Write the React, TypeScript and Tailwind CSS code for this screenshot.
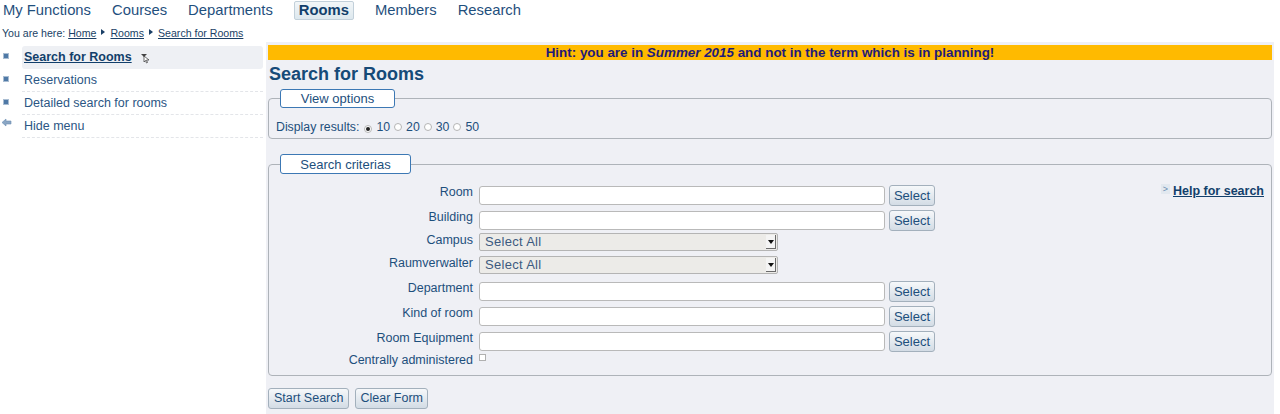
import React from "react";

const F = { fontFamily: '"Liberation Sans", Arial, sans-serif' };

function Bullet() {
  return <span className="inline-block w-[6px] h-[6px] bg-[#4f79a6] border border-[#a9bdd2] mt-[5px] ml-[3px]" />;
}

function SelectBtn() {
  return (
    <button className="h-[21px] w-[46px] rounded-[3px] border border-[#a3b0bc] bg-gradient-to-b from-[#f6f8fa] to-[#d3dce5] text-[13px] text-[#1d4f7c] leading-none">
      Select
    </button>
  );
}

function TextInput() {
  return <div className="h-[19px] w-[406px] bg-white border border-[#b9b9b9] rounded-[3px]" />;
}

function FakeSelect() {
  return (
    <div className="h-[18px] w-[299px] bg-[#ecebe8] border border-[#b4b4b4] rounded-[2px] flex items-center justify-between pl-[5px] pr-[1px]">
      <span className="text-[13px] text-[#3c5a80] tracking-[0.3px]">Select All</span>
      <span className="w-[10px] h-[14px] bg-[#f4f4f4] border-r border-b border-[#6a6a6a] flex items-center justify-center">
        <svg width="6" height="4" viewBox="0 0 6 4"><path d="M0 0h6L3 4z" fill="#111" /></svg>
      </span>
    </div>
  );
}

function Row({ label, children, h }: { label: string; children: React.ReactNode; h: string }) {
  return (
    <div className={`flex items-start ${h}`}>
      <div className="w-[204px] text-right text-[12.5px] text-[#1d4f7c] leading-[15px]">{label}</div>
      <div className="ml-[6px] flex items-center gap-[4px]">{children}</div>
    </div>
  );
}

function Radio({ checked }: { checked?: boolean }) {
  return (
    <span className="inline-flex w-[8px] h-[8px] rounded-full border border-[#b5b5b5] bg-white items-center justify-center mx-[4px]">
      {checked && <span className="w-[4px] h-[4px] rounded-full bg-[#222]" />}
    </span>
  );
}

export default function App() {
  const nav = ["My Functions", "Courses", "Departments", "Rooms", "Members", "Research"];
  return (
    <div className="w-[1280px] h-[414px] bg-white text-[#1d4f7c] overflow-hidden" style={F}>
      {/* Top nav */}
      <div className="flex items-center h-[20px] pl-[3px] text-[14.8px] leading-none text-[#1f4f7d]">
        {nav.map((n) =>
          n === "Rooms" ? (
            <span
              key={n}
              className="mr-[21px] h-[19px] px-[4px] flex items-center font-bold text-[#123f6b] bg-gradient-to-b from-[#f2f6f8] to-[#dde8ee] border border-[#c2d0da] rounded-[2px]"
            >
              {n}
            </span>
          ) : (
            <span key={n} className="mr-[21px]">{n}</span>
          )
        )}
      </div>
      {/* Breadcrumb */}
      <div className="flex items-center h-[13px] mt-[7px] pl-[2px] text-[10.6px] leading-none text-[#1a3f66]">
        <span>You are here:&nbsp;</span>
        <span className="underline">Home</span>
        <svg width="12" height="8" viewBox="0 0 12 8" className="mx-[1px] mb-[3px]"><path d="M4 1l4 3-4 3z" fill="#1a3f66" /></svg>
        <span className="underline">Rooms</span>
        <svg width="12" height="8" viewBox="0 0 12 8" className="mx-[1px] mb-[3px]"><path d="M4 1l4 3-4 3z" fill="#1a3f66" /></svg>
        <span className="underline">Search for Rooms</span>
      </div>

      <div className="flex mt-[2px]">
        {/* Sidebar */}
        <div className="w-[263px] pt-[4px] text-[12.5px]">
          {[
            { t: "Search for Rooms", active: true },
            { t: "Reservations" },
            { t: "Detailed search for rooms" },
            { t: "Hide menu", hide: true },
          ].map((it) => (
            <div key={it.t} className="flex h-[23px]">
              <div className="w-[22px] shrink-0">
                {it.hide ? (
                  <svg width="12" height="10" viewBox="0 0 12 10" className="mt-[3px] ml-[1px]">
                    <path d="M1 4.5L5 1v2h5v3H5v2z" fill="#8aa6c4" stroke="#6c8fb3" strokeWidth="0.6" />
                  </svg>
                ) : (
                  <Bullet />
                )}
              </div>
              <div
                className={`flex-1 flex items-center pl-[2px] border-b border-dashed border-[#e3e5e9] ${
                  it.active ? "bg-[#eef0f4] rounded-[3px] border-transparent" : ""
                }`}
              >
                {it.active ? (
                  <span className="font-bold underline text-[#123f6b]">{it.t}</span>
                ) : (
                  <span className="text-[#2b5684]">{it.t}</span>
                )}
                {it.active && (
                  <svg width="12" height="12" viewBox="0 0 12 12" className="ml-[8px] mt-[4px]">
                    <path d="M1 1h6L4 4z" fill="#444" />
                    <path d="M4 3v6l1.5-1.5 1 2.5 1-0.5-1-2.5H9z" fill="#fff" stroke="#333" strokeWidth="0.7" />
                  </svg>
                )}
              </div>
            </div>
          ))}
        </div>

        {/* Main */}
        <div className="ml-[3px] w-[1008px] h-[372px] bg-[#eff0f5] pt-[3px] px-[2px]">
          <div className="h-[15px] bg-[#ffba00] flex items-center justify-center text-[13.4px] font-bold text-[#1f1a78] leading-none">
            Hint: you are in&nbsp;<i>Summer 2015</i>&nbsp;and not in the term which is in planning!
          </div>
          <div className="text-[18px] font-bold text-[#164a78] leading-none mt-[5px] ml-[1px]">Search for Rooms</div>

          <fieldset className="mt-[6px] border border-[#aeb3b9] rounded-[4px] pl-[7px] pb-[4px] h-[50px]">
            <legend className="ml-[4px] w-[115px] h-[19px] bg-white border border-[#3c78b4] rounded-[3px] text-[13px] text-[#1d4f7c] flex items-center justify-center leading-none">
              View options
            </legend>
            <div className="flex items-center text-[12.3px] text-[#1d4f7c] mt-[10px]">
              <span>Display results:</span>
              <span className="ml-[1px]"><Radio checked /></span>10
              <Radio />20
              <Radio />30
              <Radio />50
            </div>
          </fieldset>

          <fieldset className="mt-[15px] border border-[#aeb3b9] rounded-[4px] pl-[7px] h-[222px]">
            <legend className="ml-[4px] w-[131px] h-[20px] bg-white border border-[#3c78b4] rounded-[3px] text-[13px] text-[#1d4f7c] flex items-center justify-center leading-none">
              Search criterias
            </legend>
            <div className="flex mt-[11px] -ml-[7px]">
              <div>
                <Row label="Room" h="h-[25px]"><TextInput /><SelectBtn /></Row>
                <Row label="Building" h="h-[23px]"><TextInput /><SelectBtn /></Row>
                <Row label="Campus" h="h-[23px]"><FakeSelect /></Row>
                <Row label="Raumverwalter" h="h-[25px]"><FakeSelect /></Row>
                <Row label="Department" h="h-[25px]"><TextInput /><SelectBtn /></Row>
                <Row label="Kind of room" h="h-[25px]"><TextInput /><SelectBtn /></Row>
                <Row label="Room Equipment" h="h-[22px]"><TextInput /><SelectBtn /></Row>
                <Row label="Centrally administered" h="h-[16px]">
                  <span className="w-[7px] h-[7px] border border-[#b0b0b0] bg-white mt-[1px]" />
                </Row>
              </div>
              <div className="ml-auto mr-[7px] mt-[-3px] flex items-start">
                <span className="w-[9px] h-[10px] bg-[#e2e8ef] text-[9px] text-[#6a8bb0] leading-[10px] flex items-center justify-center mr-[3px] mt-[2px]">&gt;</span>
                <span className="text-[12.5px] font-bold underline text-[#123f6b]">Help for search</span>
              </div>
            </div>
          </fieldset>

          <div className="flex gap-[6px] mt-[12px]">
            <button className="h-[21px] px-[5px] rounded-[3px] border border-[#a3b0bc] bg-gradient-to-b from-[#f6f8fa] to-[#d3dce5] text-[12.5px] text-[#1d4f7c] leading-none">Start Search</button>
            <button className="h-[21px] px-[4px] rounded-[3px] border border-[#a3b0bc] bg-gradient-to-b from-[#f6f8fa] to-[#d3dce5] text-[12.5px] text-[#1d4f7c] leading-none">Clear Form</button>
          </div>
        </div>
      </div>
    </div>
  );
}
